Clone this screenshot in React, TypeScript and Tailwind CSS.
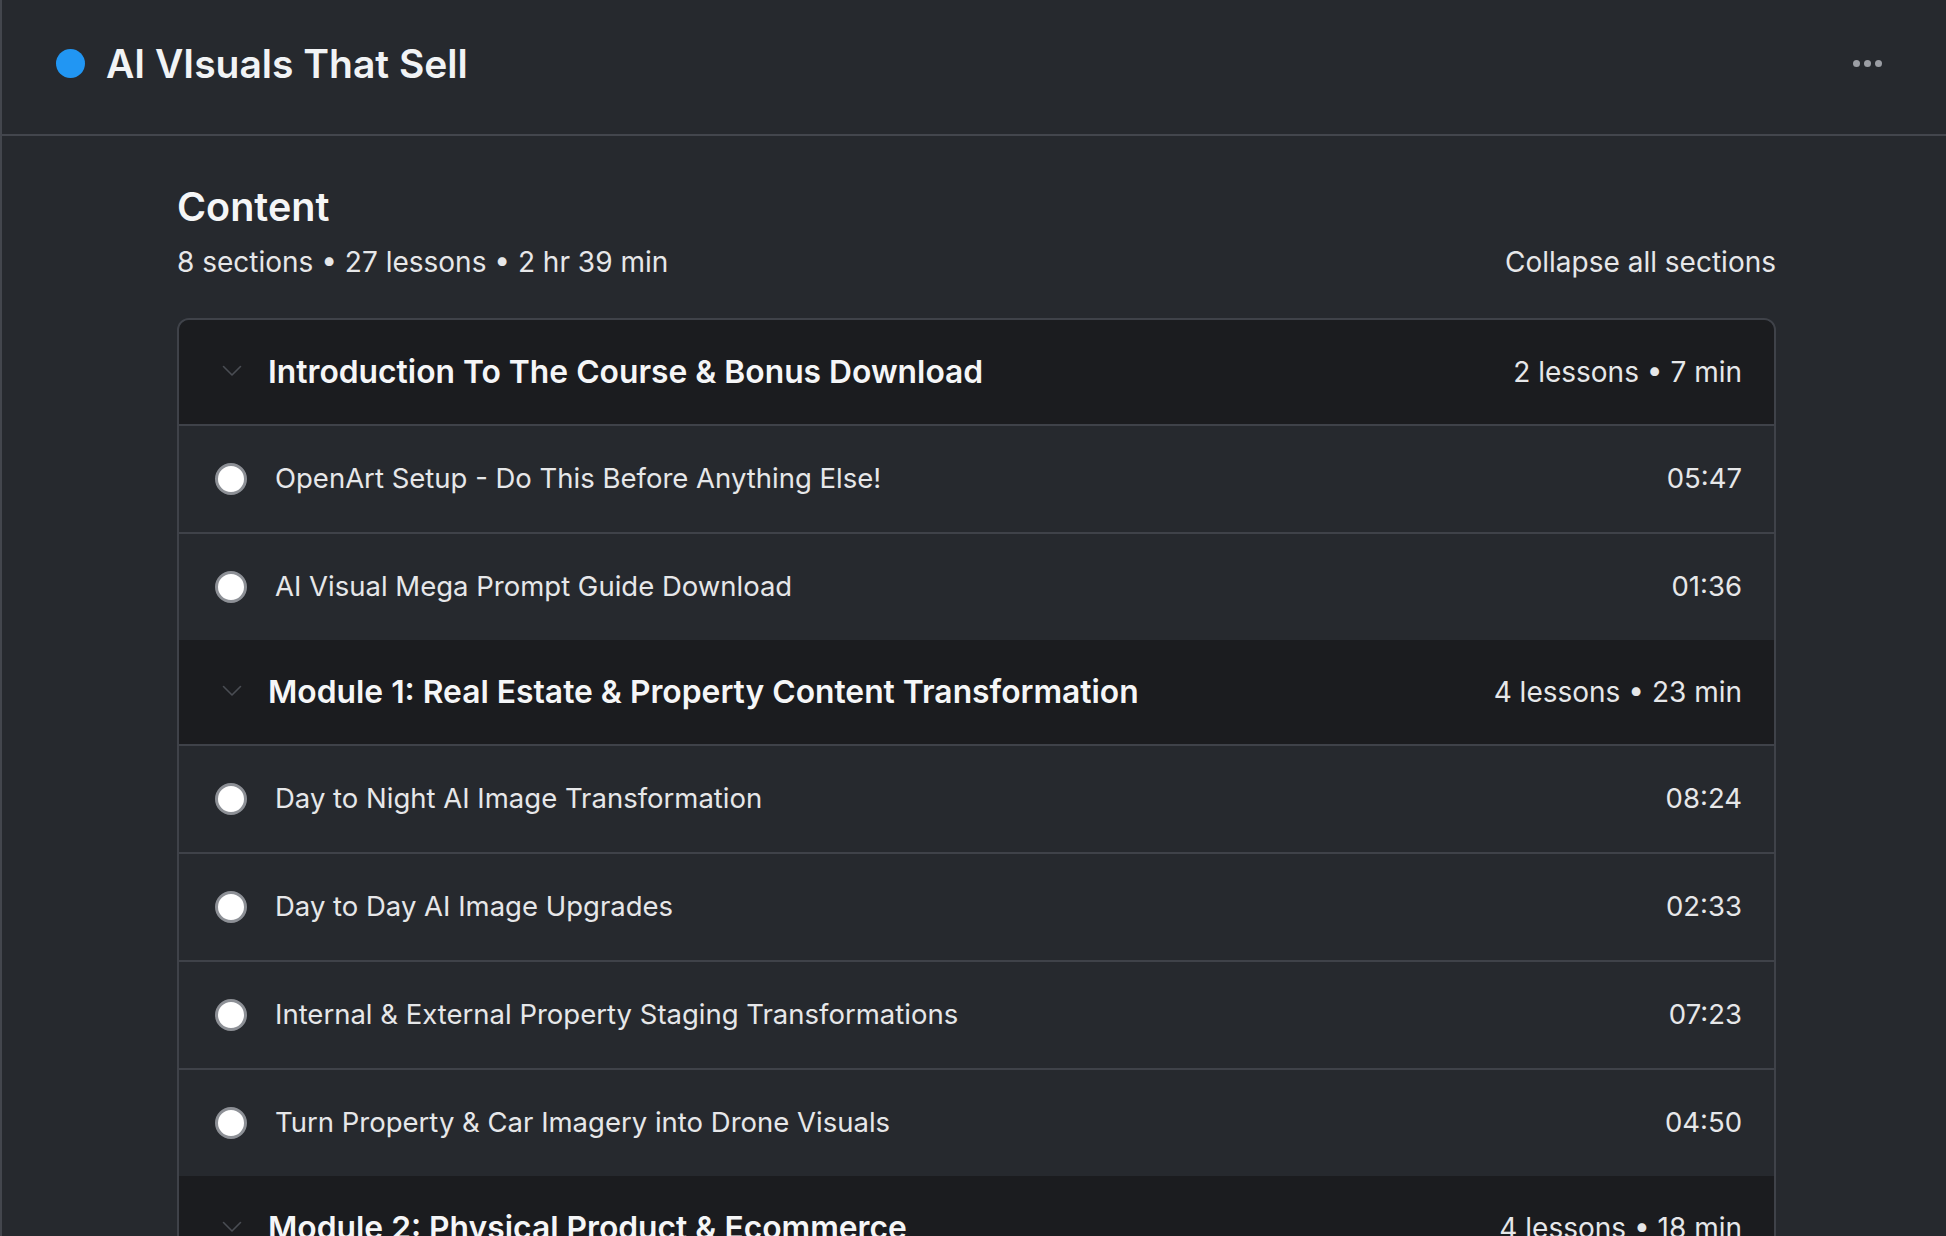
import React from "react";

type Lesson = { title: string; duration: string };
type Section = { title: string; meta: string; lessons: Lesson[] };

const sections: Section[] = [
  {
    title: "Introduction To The Course & Bonus Download",
    meta: "2 lessons • 7 min",
    lessons: [
      { title: "OpenArt Setup - Do This Before Anything Else!", duration: "05:47" },
      { title: "AI Visual Mega Prompt Guide Download", duration: "01:36" },
    ],
  },
  {
    title: "Module 1: Real Estate & Property Content Transformation",
    meta: "4 lessons • 23 min",
    lessons: [
      { title: "Day to Night AI Image Transformation", duration: "08:24" },
      { title: "Day to Day AI Image Upgrades", duration: "02:33" },
      { title: "Internal & External Property Staging Transformations", duration: "07:23" },
      { title: "Turn Property & Car Imagery into Drone Visuals", duration: "04:50" },
    ],
  },
  {
    title: "Module 2: Physical Product & Ecommerce",
    meta: "4 lessons • 18 min",
    lessons: [],
  },
];

function Chevron() {
  return (
    <svg viewBox="0 0 20 12" className="h-[12px] w-[20px] shrink-0" fill="none">
      <path d="M1.5 1.5 L10 10 L18.5 1.5" stroke="#4a4d53" strokeWidth="1.6" strokeLinecap="round" strokeLinejoin="round" />
    </svg>
  );
}

function SectionBlock({ section }: { section: Section }) {
  return (
    <div>
      {/* section header */}
      <div className="flex h-[106px] items-center justify-between border-b-2 border-[#3f4249] bg-[#1b1c1f] pl-[43px] pr-[32px]">
        <div className="flex items-center gap-[26px]">
          <Chevron />
          <span className="text-[31.8px] font-semibold leading-none text-[#f5f6f7]">{section.title}</span>
        </div>
        <span className="text-[28px] leading-none text-[#e6e7e9]">{section.meta}</span>
      </div>

      {section.lessons.map((lesson, i) => (
        <div
          key={lesson.title}
          className={
            "flex items-center justify-between pl-[36px] pr-[32px] " +
            (i < section.lessons.length - 1 ? "h-[108px] border-b-2 border-[#3f4249]" : "h-[106px]")
          }
        >
          <div className="flex items-center gap-[28px]">
            <span className="h-[32px] w-[32px] shrink-0 rounded-full border-[3px] border-[#8d9096] bg-white" />
            <span className="text-[27.5px] leading-none text-[#e6e7e9]">{lesson.title}</span>
          </div>
          <span className="text-[27.5px] leading-none text-[#e6e7e9]">{lesson.duration}</span>
        </div>
      ))}
    </div>
  );
}

export default function App() {
  return (
    <div
      className="flex h-screen flex-col overflow-hidden border-l-2 border-[#43464d] bg-[#26292e] text-white"
      style={{ fontFamily: "Inter, 'Noto Sans', sans-serif" }}
    >
      {/* top bar */}
      <header className="flex h-[136px] shrink-0 items-center justify-between border-b-2 border-[#43464d] pb-[8px] pl-[54px] pr-[64px]">
        <div className="flex items-center gap-[21px]">
          <span className="h-[29px] w-[29px] rounded-full bg-[#2196f3]" />
          <h1 className="text-[39px] font-semibold leading-none text-[#f1f3f5]">AI VIsuals That Sell</h1>
        </div>
        <div className="flex items-center gap-[4px]">
          <span className="h-[7px] w-[7px] rounded-full bg-[#9b9ea4]" />
          <span className="h-[7px] w-[7px] rounded-full bg-[#9b9ea4]" />
          <span className="h-[7px] w-[7px] rounded-full bg-[#9b9ea4]" />
        </div>
      </header>

      {/* course content */}
      <main className="flex-1 overflow-hidden pl-[175px] pr-[170px] pt-[52px]">
        <h2 className="text-[39.5px] font-semibold leading-none text-[#f5f6f7]">Content</h2>
        <div className="mt-[20px] flex items-center justify-between text-[28px] leading-none text-[#e6e7e9]">
          <span>8 sections • 27 lessons • 2 hr 39 min</span>
          <button className="leading-none">Collapse all sections</button>
        </div>

        <div className="mt-[42px] overflow-hidden rounded-xl border-2 border-[#3f4249]">
          {sections.map((s) => (
            <SectionBlock key={s.title} section={s} />
          ))}
        </div>
      </main>
    </div>
  );
}
